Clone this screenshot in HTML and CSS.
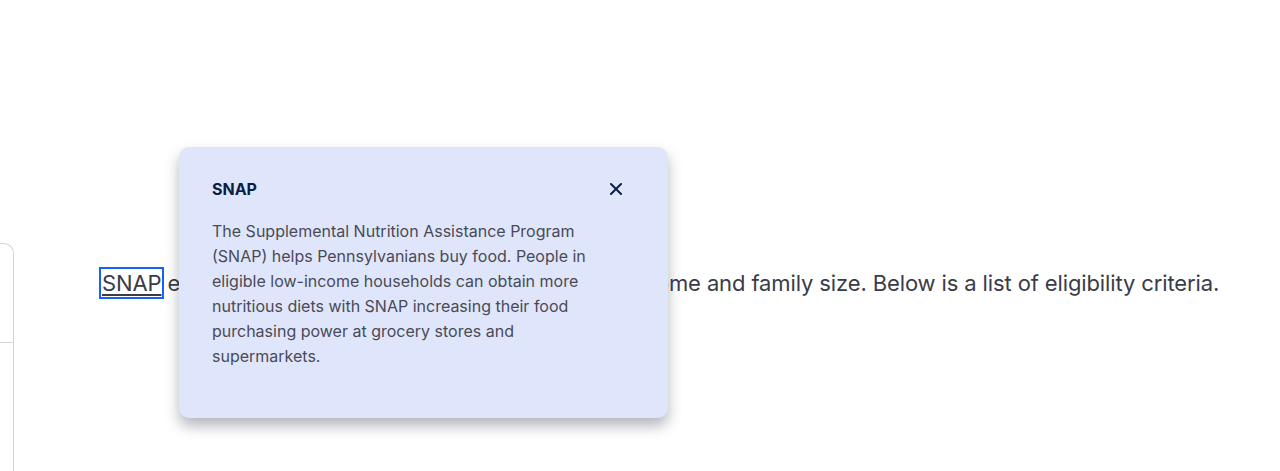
FILE: index.html
```html
<!DOCTYPE html>
<html lang="en">
<head>
  <meta charset="UTF-8" />
  <meta name="viewport" content="width=device-width, initial-scale=1.0" />
  <title>SNAP eligibility</title>
  <link rel="stylesheet" href="styles.css">
</head>
<body>
  <div class="page">
    <aside class="side-card">
      <div class="side-top"></div>
      <div class="side-bottom"></div>
    </aside>
    <main class="content">
      <p class="intro">
        <a href="#" class="term">SNAP</a> eligibility is determined based on household income and family size. Below is a list of eligibility criteria.
      </p>
      <div class="tooltip" role="dialog">
        <div class="tooltip-head">
          <h2>SNAP</h2>
          <button class="close" aria-label="Close">
            <svg width="12" height="12" viewBox="0 0 12 12"><path d="M1 1L11 11M11 1L1 11" stroke="#0b1f45" stroke-width="2" stroke-linecap="round"/></svg>
          </button>
        </div>
        <p>The Supplemental Nutrition Assistance Program (SNAP) helps Pennsylvanians buy food. People in eligible low-income households can obtain more nutritious diets with SNAP increasing their food purchasing power at grocery stores and supermarkets.</p>
      </div>
    </main>
  </div>
</body>
</html>
```

FILE: styles.css
```css
body {
  margin: 0;
  font-family: Inter, "Noto Sans", sans-serif;
  background-color: #fff;
  color: #3b3b48;
  height: 471px;
  overflow: hidden;
}
.page {
  display: flex;
  padding-top: 243px;
}
.side-card {
  flex: none;
  width: 200px;
  margin-left: -188px;
  height: 228px;
  border: 1px solid #d3d3dc;
  border-bottom: none;
  border-radius: 10px 10px 0 0;
}
.side-top {
  height: 98px;
  border-bottom: 1px solid #d3d3dc;
}
.content {
  position: relative;
  padding-left: 88px;
}
.intro {
  margin: 22px 0 0;
  font-size: 22px;
  line-height: 36px;
  letter-spacing: -0.12px;
}
.term {
  color: #3b3b48;
  text-decoration: underline;
  text-decoration-thickness: 2px;
  text-underline-offset: 3px;
  outline: 2px solid #1660ff;
  outline-offset: 1px;
}
.tooltip {
  position: absolute;
  left: 165px;
  top: -96px;
  width: 423px;
  min-height: 207px;
  padding: 32px 33px;
  background-color: #dfe6fb;
  border-radius: 10px;
  box-shadow: 0 8px 14px rgba(40, 50, 70, 0.35);
}
.tooltip-head {
  display: flex;
  justify-content: space-between;
  align-items: center;
}
.tooltip h2 {
  margin: 0;
  font-size: 16px;
  font-weight: 700;
  color: #0b1f45;
}
.close {
  border: none;
  background: none;
  padding: 0;
  margin-right: 13px;
  cursor: pointer;
  display: flex;
}
.tooltip p {
  max-width: 400px;
  margin: 20px 0 0;
  font-size: 16px;
  line-height: 25px;
  color: #4a4a56;
}
```
